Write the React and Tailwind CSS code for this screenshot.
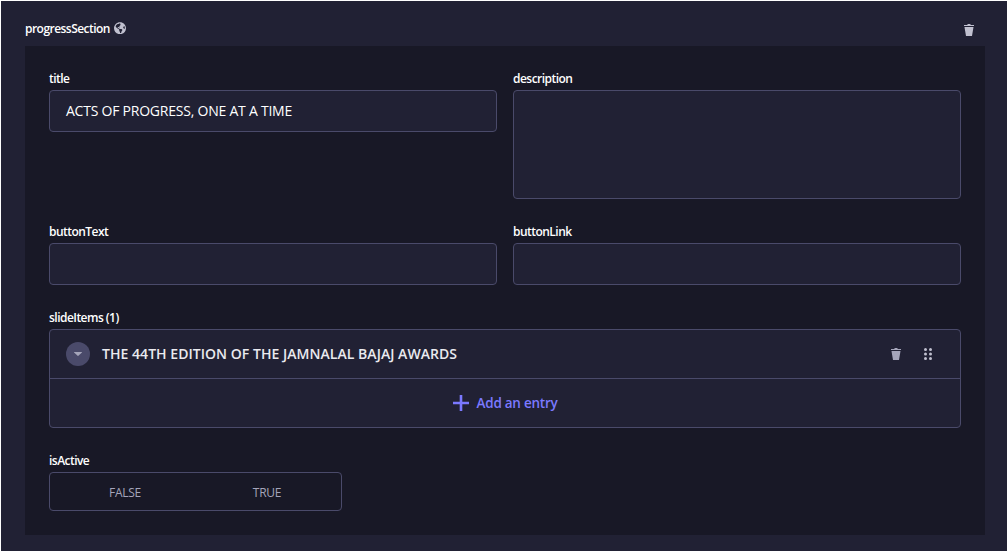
import React from "react";

function Trash({ className }) {
  return (
    <svg viewBox="0 0 24 24" className={`size-3 shrink-0 fill-current ${className}`}>
      <path d="M3.236 6.149a.2.2 0 0 0-.197.233L6 24h12l2.96-17.618a.2.2 0 0 0-.196-.233H3.236ZM21.8 1.983c.11 0 .2.09.2.2v1.584a.2.2 0 0 1-.2.2H2.2a.2.2 0 0 1-.2-.2V2.183c0-.11.09-.2.2-.2h5.511c.9 0 1.631-1.09 1.631-1.983h5.316c0 .894.73 1.983 1.631 1.983H21.8Z" />
    </svg>
  );
}

function Globe() {
  return (
    <svg viewBox="0 0 496 512" className="h-[12.4px] w-3 shrink-0 fill-[#c0c0cf]">
      <path d="M248 8C111.03 8 0 119.03 0 256s111.03 248 248 248 248-111.03 248-248S384.97 8 248 8zm82.29 357.6c-3.9 3.88-7.99 7.95-11.31 11.28-2.99 3-5.1 6.7-6.17 10.71-1.51 5.66-2.73 11.38-4.77 16.87l-17.39 46.85c-13.76 3-28 4.69-42.65 4.69v-27.38c1.69-12.62-7.64-36.26-22.63-51.25-6-6-9.37-14.14-9.37-22.63v-32.01c0-11.64-6.27-22.34-16.46-27.97-14.37-7.95-34.81-19.06-48.81-26.11-11.48-5.78-22.1-13.14-31.65-21.75l-.8-.72a114.792 114.792 0 0 1-18.06-20.74c-9.38-13.77-24.66-36.42-34.59-51.14 20.47-45.5 57.36-82.04 103.2-101.89l24.01 12.01C203.48 89.74 216 82.01 216 70.11v-11.3c7.99-1.29 16.12-2.11 24.39-2.42l28.3 28.3c6.25 6.25 6.25 16.38 0 22.63L264 112l-10.34 10.34c-3.12 3.12-3.12 8.19 0 11.31l4.69 4.69c3.12 3.12 3.12 8.19 0 11.31l-8 8a8.008 8.008 0 0 1-5.66 2.34h-8.99c-2.08 0-4.08.81-5.58 2.27l-9.92 9.65a8.008 8.008 0 0 0-1.58 9.31l15.59 31.19c2.66 5.32-1.21 11.58-7.15 11.58h-5.64c-1.93 0-3.79-.7-5.24-1.96l-9.28-8.06a16.017 16.017 0 0 0-15.55-3.1l-31.17 10.39a11.95 11.95 0 0 0-8.17 11.34c0 4.53 2.56 8.66 6.61 10.69l11.08 5.54c9.41 4.71 19.79 7.16 30.31 7.16s22.59 27.29 32 32h66.75c8.49 0 16.62 3.37 22.63 9.37l13.69 13.69a30.503 30.503 0 0 1 8.93 21.57 46.536 46.536 0 0 1-13.72 32.98zM417 274.25c-5.79-1.45-10.84-5-14.15-9.97l-17.98-26.97a23.97 23.97 0 0 1 0-26.62l19.59-29.38c2.32-3.47 5.5-6.29 9.24-8.15l12.98-6.49C440.2 193.59 448 223.87 448 256c0 8.67-.74 17.16-1.82 25.54L417 274.25z" />
    </svg>
  );
}

function Label({ children, className = "" }) {
  return (
    <div className={`h-3 text-xs leading-[14px] font-semibold tracking-[-0.53px] whitespace-nowrap text-white ${className}`}>
      {children}
    </div>
  );
}

function Box({ className = "", children }) {
  return (
    <div className={`rounded-[4px] border border-[#4a4a6a] bg-[#212134] ${className}`}>{children}</div>
  );
}

export default function App() {
  return (
    <div className="h-[551px] w-[1007px] overflow-hidden border-t border-l border-white bg-[#212134] pt-[21px] pr-[22px] pl-6 font-['Open_Sans','Noto_Sans',sans-serif]">
      <header className="flex h-6 items-start justify-between pr-[10px]">
        <div className="flex items-center gap-1">
          <Label className="w-[85px]">progressSection</Label>
          <Globe />
        </div>
        <Trash className="mt-[2px] text-[#c0c0cf]" />
      </header>
      <main className="h-[489px] bg-[#181826] px-6 pt-[26px]">
        <div className="grid grid-cols-2 gap-x-4">
          <div>
            <Label>title</Label>
            <Box className="mt-[6px] flex h-[42px] items-center px-4 text-sm whitespace-nowrap text-white">
              <span className="tracking-[-0.23px]">ACTS OF PROGRESS, ONE AT A TIME</span>
            </Box>
          </div>
          <div>
            <Label>description</Label>
            <Box className="mt-[6px] h-[109px]" />
          </div>
          <div className="mt-[26px]">
            <Label>buttonText</Label>
            <Box className="mt-[6px] h-[42px]" />
          </div>
          <div className="mt-[26px]">
            <Label>buttonLink</Label>
            <Box className="mt-[6px] h-[42px]" />
          </div>
        </div>
        <Label className="mt-[26px]">slideItems (1)</Label>
        <Box className="mt-[6px] h-[99px]">
          <div className="flex h-[49px] items-center border-b border-[#4a4a6a] pr-7 pl-4">
            <div className="flex size-6 items-center justify-center rounded-full bg-[#4a4a6a]">
              <svg viewBox="0 0 8 4" className="h-1 w-2 fill-[#a5a5ba]">
                <path d="M.4 0h7.2c.4 0 .5.4.3.6L4.4 3.8a.6.6 0 0 1-.8 0L.1.6C-.1.4 0 0 .4 0Z" />
              </svg>
            </div>
            <span className="ml-3 text-sm font-semibold tracking-[0.04px] whitespace-nowrap text-[#eaeaef]">
              THE 44TH EDITION OF THE JAMNALAL BAJAJ AWARDS
            </span>
            <Trash className="ml-auto text-[#a5a5ba]" />
            <svg viewBox="0 0 8 12" className="ml-[22px] h-3 w-2 fill-[#c0c0cf]">
              {[1.5, 6, 10.5].map((y) => (
                <g key={y}>
                  <circle cx="1.5" cy={y} r="1.5" />
                  <circle cx="6.5" cy={y} r="1.5" />
                </g>
              ))}
            </svg>
          </div>
          <div className="flex h-12 items-center justify-center gap-2 text-[#7b79ff]">
            <svg viewBox="0 0 16 16" className="size-4 fill-current">
              <path d="M6.7 0h2.6v6.7H16v2.6H9.3V16H6.7V9.3H0V6.7h6.7Z" />
            </svg>
            <span className="text-[13.5px] font-semibold tracking-[-0.25px] whitespace-nowrap">Add an entry</span>
          </div>
        </Box>
        <Label className="mt-[26px]">isActive</Label>
        <div className="mt-[6px] grid h-[39px] w-[293px] grid-cols-2 items-center rounded-[4px] border border-[#4a4a6a] pt-[2px] pr-[3px] pl-1 text-center text-xs font-medium tracking-[-0.25px] text-[#a5a5ba]">
          <span>FALSE</span>
          <span>TRUE</span>
        </div>
      </main>
    </div>
  );
}
